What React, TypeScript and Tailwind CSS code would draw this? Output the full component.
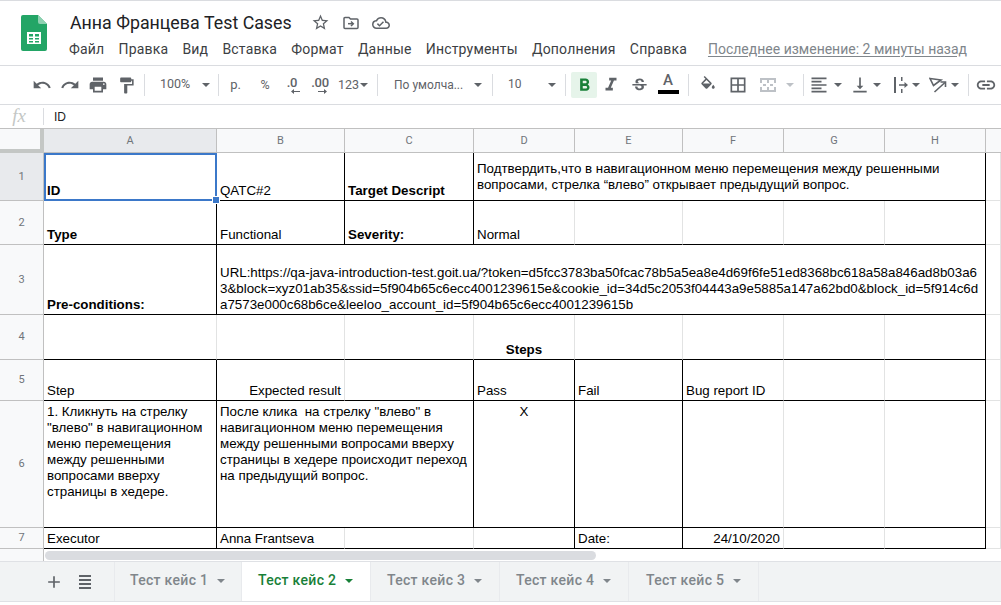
import React from "react";
import {
  MdUndo,
  MdRedo,
  MdPrint,
  MdFormatPaint,
  MdFormatBold,
  MdFormatItalic,
  MdStrikethroughS,
  MdBorderAll,
  MdFormatAlignLeft,
  MdVerticalAlignBottom,
  MdLink,
  MdAdd,
  MdStarBorder,
  MdOutlineCloudDone,
} from "react-icons/md";

const menu = ["Файл", "Правка", "Вид", "Вставка", "Формат", "Данные", "Инструменты", "Дополнения", "Справка"];
const columns = ["A", "B", "C", "D", "E", "F", "G", "H"];
const tabs = [
  { label: "Тест кейс 1", cls: "w-[127px] pl-[15px] text-[#80868b]", caret: "border-t-[#80868b]" },
  { label: "Тест кейс 2", cls: "w-[129px] pl-[16px] bg-white text-[#188038]", caret: "border-t-[#188038]" },
  { label: "Тест кейс 3", cls: "w-[129px] pl-[16px] text-[#80868b]", caret: "border-t-[#80868b]" },
  { label: "Тест кейс 4", cls: "w-[129px] pl-[16px] text-[#80868b]", caret: "border-t-[#80868b]" },
  { label: "Тест кейс 5", cls: "w-[130px] pl-[17px] text-[#80868b]", caret: "border-t-[#80868b]" },
];

const Caret = ({ className = "border-t-[#5f6368]" }: { className?: string }) => (
  <span className={`inline-block w-0 h-0 shrink-0 border-x-[4px] border-x-transparent border-t-[4px] ${className}`} />
);

const Sep = () => <div className="w-px h-[22px] bg-[#dadce0] shrink-0" />;

const Tool = ({ className, children }: { className: string; children: React.ReactNode }) => (
  <div className={`flex items-center justify-center h-full shrink-0 ${className}`}>{children}</div>
);

const Logo = () => (
  <svg width="26" height="36" viewBox="0 0 26 36">
    <path d="M2 0h15l9 9v25a2 2 0 0 1-2 2H2a2 2 0 0 1-2-2V2a2 2 0 0 1 2-2z" fill="#23a566" />
    <path d="M17 0l9 9h-7a2 2 0 0 1-2-2z" fill="#8ed1b1" />
    <path d="M6 17h14v12H6zm2 2v2.500h4V19zm6 0v2.500h4V19zM8 23v1.500h4V23zm6 0v1.500h4V23zM8 26v1.500h4V26zm6 0v1.500h4V26z" fill="#fff" fillRule="evenodd" />
  </svg>
);

const FolderMove = () => (
  <svg width="16" height="14" viewBox="0 0 16 14" fill="none" stroke="#5f6368" strokeWidth="1.500">
    <path d="M1 2.500a1 1 0 0 1 1-1h4l1.500 1.500H14a1 1 0 0 1 1 1v7.500a1 1 0 0 1-1 1H2a1 1 0 0 1-1-1z" />
    <path d="M5 7.700h5" />
    <path d="M8 5.500l2.300 2.200L8 10" />
  </svg>
);

const FillIcon = () => (
  <svg width="18" height="18" viewBox="0 0 24 24" fill="#5f6368">
    <path d="M16.560 8.940L7.620 0 6.210 1.410l2.380 2.380-5.150 5.150c-.59.59-.59 1.540 0 2.120l5.500 5.500c.29.29.68.44 1.060.44s.77-.15 1.060-.44l5.500-5.500c.59-.58.59-1.530 0-2.120zM5.210 10L10 5.210 14.790 10H5.210zM19 11.500s-2 2.170-2 3.500c0 1.100.9 2 2 2s2-.9 2-2c0-1.330-2-3.500-2-3.500z" />
  </svg>
);

const MergeIcon = () => (
  <svg width="16" height="16" viewBox="0 0 16 16" fill="#bdc1c6">
    <path d="M0 1h16v2H0zM0 13h16v2H0zM0 3h2v3H0zM14 3h2v3h-2zM0 10h2v3H0zM14 10h2v3h-2zM7 3h2v3H7zM7 10h2v3H7zM3 7h3v2H3zM10 7h3v2h-3z" />
  </svg>
);

const ClipIcon = () => (
  <svg width="16" height="16" viewBox="0 0 16 16" fill="#5f6368">
    <path d="M0 0h2v16H0zM7 0h1.500v4H7zM7 12h1.500v4H7zM5 7.300h5.500V5l3.500 3-3.500 3V8.700H5z" />
  </svg>
);

const RotateIcon = () => (
  <svg width="18" height="16" viewBox="0 0 18 16" fill="none" stroke="#5f6368" strokeWidth="1.600">
    <path d="M1 1.500l11 1.500-7.500 5.500z" />
    <path d="M5.500 15L16 5.500" />
    <path d="M11.500 5h5v5" />
  </svg>
);

const DecimalIcon = ({ label, arrow }: { label: string; arrow: string }) => (
  <div className="flex flex-col items-center font-['Roboto',sans-serif] text-[13px] leading-[13px] text-[#5f6368] font-medium">
    <span className="tracking-tight">{label}</span>
    <svg width="9" height="5" viewBox="0 0 9 5" className="ml-[6px]" fill="#5f6368">
      <path d={arrow} />
    </svg>
  </div>
);

const Toolbar = () => (
  <div className="h-[38px] box-content shrink-0 flex items-center pl-[28px] border-b border-[#dadce0] text-[#5f6368] overflow-hidden">
    <Tool className="w-[28px]"><MdUndo size={20} /></Tool>
    <Tool className="w-[28px]"><MdRedo size={20} /></Tool>
    <Tool className="w-[28px]"><MdPrint size={20} /></Tool>
    <Tool className="w-[28px]"><MdFormatPaint size={19} /></Tool>
    <div className="w-[4px] shrink-0" />
    <Sep />
    <Tool className="w-[73px] !justify-between pl-[15px] pr-[8px]">
      <span className="text-[12.500px] -mt-[2px]">100%</span>
      <Caret />
    </Tool>
    <Sep />
    <Tool className="w-[33px] text-[13px]">р.</Tool>
    <Tool className="w-[26px] text-[12.500px]">%</Tool>
    <Tool className="w-[28px]"><DecimalIcon label=".0" arrow="M9 2H3V0L0 2.500 3 5V3h6z" /></Tool>
    <Tool className="w-[28px]"><DecimalIcon label=".00" arrow="M0 2h6V0l3 2.500L6 5V3H0z" /></Tool>
    <Tool className="w-[43px] !justify-start pl-[4px] gap-[1px] text-[12.500px]">
      123
      <Caret />
    </Tool>
    <Sep />
    <Tool className="w-[114px] !justify-between pl-[16px] pr-[10px]">
      <span className="text-[12px]">По умолча...</span>
      <Caret />
    </Tool>
    <Sep />
    <Tool className="w-[72px] !justify-between pl-[15px] pr-[9px]">
      <span className="text-[12px] -mt-[2px]">10</span>
      <Caret />
    </Tool>
    <Sep />
    <div className="w-[5px] shrink-0" />
    <div className="w-[26px] h-[26px] shrink-0 flex items-center justify-center bg-[#e6f4ea] text-[#188038] rounded-[2px]">
      <MdFormatBold size={21} />
    </div>
    <Tool className="w-[28px]"><MdFormatItalic size={22} /></Tool>
    <Tool className="w-[28px]"><MdStrikethroughS size={19} /></Tool>
    <Tool className="w-[30px]">
      <div className="flex flex-col items-center w-[21px]">
        <span className="text-[15px] leading-[15px] font-medium -mt-[3px]">A</span>
        <div className="w-[21px] h-[4px] bg-black mt-[2px]" />
      </div>
    </Tool>
    <div className="w-[5px] shrink-0" />
    <Sep />
    <Tool className="w-[38px]"><FillIcon /></Tool>
    <Tool className="w-[22px]"><MdBorderAll size={20} /></Tool>
    <Tool className="w-[37px]"><MergeIcon /></Tool>
    <Caret className="border-t-[#bdc1c6]" />
    <div className="w-[9px] shrink-0" />
    <Sep />
    <Tool className="w-[30px]"><MdFormatAlignLeft size={20} /></Tool>
    <Caret />
    <Tool className="w-[20px] ml-[8px]"><MdVerticalAlignBottom size={20} /></Tool>
    <div className="w-[3px] shrink-0" />
    <Caret />
    <Tool className="w-[20px] ml-[11px]"><ClipIcon /></Tool>
    <Caret />
    <Tool className="w-[20px] ml-[8px]"><RotateIcon /></Tool>
    <div className="w-[3px] shrink-0" />
    <Caret />
    <div className="w-[9px] shrink-0" />
    <Sep />
    <Tool className="w-[34px]"><MdLink size={22} /></Tool>
  </div>
);

const light = "border-r-[#e2e3e3]";
const blackR = "border-r-black";
const lightB = "border-b-[#e2e3e3]";
const blackB = "border-b-black";

const Cell = ({ className = "", children }: { className?: string; children?: React.ReactNode }) => (
  <div className={`border-r border-b px-[3px] overflow-hidden whitespace-nowrap flex ${className}`}>
    {children && <div className="w-full">{children}</div>}
  </div>
);

const Gutter = ({ n, active }: { n: number; active?: boolean }) => (
  <div className={`border-r border-b border-[#c0c0c0] flex items-center justify-center text-[11px] text-[#70757a] font-['Roboto',sans-serif] ${active ? "bg-[#e8eaed]" : "bg-[#f8f9fa]"}`}>
    {n}
  </div>
);

const Sheet = () => (
  <div className="grid shrink-0 grid-cols-[44px_173px_128px_129px_101px_108px_101px_101px_101px_15px] grid-rows-[24px_48px_44px_70px_45px_41px_127px_21px] font-['Liberation_Sans',Arial,sans-serif] text-[13.330px] leading-[16px] text-black border-t border-[#c0c0c0] box-content">
    <div className="border-r-4 border-b-4 border-[#c4c7c5] bg-[#f8f9fa]" />
    {columns.map((c) => (
      <div
        key={c}
        className={`border-r border-b border-[#c0c0c0] flex items-center justify-center text-[11px] text-[#70757a] font-['Roboto',sans-serif] ${c === "A" ? "bg-[#e8eaed]" : "bg-[#f8f9fa]"}`}
      >
        {c}
      </div>
    ))}
    <div className="border-b border-[#c0c0c0] bg-[#f8f9fa]" />

    {/* row 1 */}
    <Gutter n={1} active />
    <div className="relative border-2 border-[#3b78c9] flex items-end px-px font-bold">
      ID
      <div className="absolute -right-[5px] -bottom-[5px] w-[8px] h-[8px] bg-[#3b78c9] border border-white z-10" />
    </div>
    <Cell className={`items-end pb-[1px] ${blackR} ${blackB}`}>QATC#2</Cell>
    <Cell className={`items-end pb-[1px] font-bold ${blackR} ${blackB}`}>Target Descript</Cell>
    <Cell className={`col-span-5 items-center ${blackR} ${blackB}`}>
      Подтвердить,что в навигационном меню перемещения между решенными
      <br />
      вопросами, стрелка “влево” открывает предыдущий вопрос.
    </Cell>
    <Cell className={`${light} ${lightB}`} />

    {/* row 2 */}
    <Gutter n={2} />
    <Cell className={`items-end pb-[1px] font-bold ${blackR} ${blackB}`}>Type</Cell>
    <Cell className={`items-end pb-[1px] ${blackR} ${blackB}`}>Functional</Cell>
    <Cell className={`items-end pb-[1px] font-bold ${blackR} ${blackB}`}>Severity:</Cell>
    <Cell className={`items-end pb-[1px] ${light} ${blackB}`}>Normal</Cell>
    <Cell className={`${light} ${blackB}`} />
    <Cell className={`${light} ${blackB}`} />
    <Cell className={`${light} ${blackB}`} />
    <Cell className={`${blackR} ${blackB}`} />
    <Cell className={`${light} ${lightB}`} />

    {/* row 3 */}
    <Gutter n={3} />
    <Cell className={`items-end pb-[1px] font-bold ${blackR} ${blackB}`}>Pre-conditions:</Cell>
    <Cell className={`col-span-7 items-end pb-[1px] ${blackR} ${blackB}`}>
      URL:https://qa-java-introduction-test.goit.ua/?token=d5fcc3783ba50fcac78b5a5ea8e4d69f6fe51ed8368bc618a58a846ad8b03a6
      <br />
      3&amp;block=xyz01ab35&amp;ssid=5f904b65c6ecc4001239615e&amp;cookie_id=34d5c2053f04443a9e5885a147a62bd0&amp;block_id=5f914c6d
      <br />
      a7573e000c68b6ce&amp;leeloo_account_id=5f904b65c6ecc4001239615b
    </Cell>
    <Cell className={`${light} ${lightB}`} />

    {/* row 4 */}
    <Gutter n={4} />
    <Cell className={`${light} ${blackB}`} />
    <Cell className={`${light} ${blackB}`} />
    <Cell className={`${light} ${blackB}`} />
    <Cell className={`items-end pb-[1px] text-center font-bold ${light} ${blackB}`}>Steps</Cell>
    <Cell className={`${light} ${blackB}`} />
    <Cell className={`${light} ${blackB}`} />
    <Cell className={`${light} ${blackB}`} />
    <Cell className={`${blackR} ${blackB}`} />
    <Cell className={`${light} ${lightB}`} />

    {/* row 5 */}
    <Gutter n={5} />
    <Cell className={`items-end pb-[1px] ${blackR} ${blackB}`}>Step</Cell>
    <Cell className={`items-end pb-[1px] text-right ${light} ${blackB}`}>Expected result</Cell>
    <Cell className={`${blackR} ${blackB}`} />
    <Cell className={`items-end pb-[1px] ${blackR} ${blackB}`}>Pass</Cell>
    <Cell className={`items-end pb-[1px] ${blackR} ${blackB}`}>Fail</Cell>
    <Cell className={`items-end pb-[1px] ${light} ${blackB}`}>Bug report ID</Cell>
    <Cell className={`${light} ${blackB}`} />
    <Cell className={`${blackR} ${blackB}`} />
    <Cell className={`${light} ${lightB}`} />

    {/* row 6 */}
    <Gutter n={6} />
    <Cell className={`items-start pt-[3px] ${blackR} ${blackB}`}>
      1. Кликнуть на стрелку
      <br />
      "влево" в навигационном
      <br />
      меню перемещения
      <br />
      между решенными
      <br />
      вопросами вверху
      <br />
      страницы в хедере.
    </Cell>
    <Cell className={`col-span-2 items-start pt-[3px] whitespace-pre ${blackR} ${blackB}`}>
      {'После клика  на стрелку "влево" в'}
      <br />
      навигационном меню перемещения
      <br />
      между решенными вопросами вверху
      <br />
      страницы в хедере происходит переход
      <br />
      на предыдущий вопрос.
    </Cell>
    <Cell className={`items-start pt-[3px] text-center ${blackR} ${blackB}`}>X</Cell>
    <Cell className={`${blackR} ${blackB}`} />
    <Cell className={`${light} ${blackB}`} />
    <Cell className={`${light} ${blackB}`} />
    <Cell className={`${blackR} ${blackB}`} />
    <Cell className={`${light} ${lightB}`} />

    {/* row 7 */}
    <Gutter n={7} />
    <Cell className={`items-end pb-[1px] ${blackR} ${blackB}`}>Executor</Cell>
    <Cell className={`items-end pb-[1px] ${light} ${blackB}`}>Anna Frantseva</Cell>
    <Cell className={`${light} ${blackB}`} />
    <Cell className={`${blackR} ${blackB}`} />
    <Cell className={`items-end pb-[1px] ${blackR} ${blackB}`}>Date:</Cell>
    <Cell className={`items-end pb-[1px] text-right ${light} ${blackB}`}>24/10/2020</Cell>
    <Cell className={`${light} ${blackB}`} />
    <Cell className={`${blackR} ${blackB}`} />
    <Cell className={`${light} ${lightB}`} />
  </div>
);

const App: React.FC = () => {
  return (
    <div className="w-[1001px] h-[605px] overflow-hidden flex flex-col bg-white font-['Roboto',sans-serif] border-t border-[#dadce0]">
      {/* header */}
      <div className="h-[64px] box-content border-b border-[#dadce0] flex shrink-0">
        <div className="w-[69px] shrink-0 pl-[21px] pt-[14px]">
          <Logo />
        </div>
        <div className="flex flex-col">
          <div className="flex items-center h-[21px] mt-[11px] pl-px">
            <span className="text-[17.800px] leading-[21px] text-[#202124] w-[241px] whitespace-nowrap">Анна Францева Test Cases</span>
            <MdStarBorder size={19} className="text-[#5f6368]" />
            <div className="ml-[13px]"><FolderMove /></div>
            <MdOutlineCloudDone size={18} className="text-[#5f6368] ml-[13px]" />
          </div>
          <div className="flex items-center h-[20px] mt-[6px] text-[14px] text-[#3c4043] whitespace-nowrap">
            <div className="flex gap-[14.200px] tracking-[0.180px]">
              {menu.map((m) => (
                <span key={m}>{m}</span>
              ))}
            </div>
            <span className="ml-[21px] text-[#80868b] underline underline-offset-2">Последнее изменение: 2 минуты назад</span>
          </div>
        </div>
      </div>

      <Toolbar />

      {/* formula bar */}
      <div className="h-[23px] shrink-0 flex items-center text-[12px] text-[#202124]">
        <div className="w-[43px] text-center pr-[5px] font-['Liberation_Serif',serif] italic text-[19px] text-[#c4c7c5]">fx</div>
        <div className="w-px h-[17px] bg-[#dadce0]" />
        <span className="ml-[10px] font-['Liberation_Sans',sans-serif]">ID</span>
      </div>

      <Sheet />

      {/* horizontal scrollbar */}
      <div className="h-[12px] shrink-0 flex">
        <div className="w-[44px] bg-[#f8f9fa] border-r border-[#c0c0c0]" />
        <div className="flex-1 pl-px pt-[2px]">
          <div className="w-[551px] h-[9px] rounded-full bg-[#dadce0]" />
        </div>
      </div>

      {/* sheet tabs */}
      <div className="h-[41px] shrink-0 flex bg-[#f1f3f4] border-t border-b border-[#dfe1e5] text-[14px] font-medium tracking-[0.300px]">
        <div className="w-[115px] flex items-center text-[#5f6368] border-r border-[#e8eaed]">
          <MdAdd size={20} className="ml-[44px]" />
          <div className="ml-[15px] w-[12px] flex flex-col gap-[2px]">
            <div className="h-[2px] bg-[#5f6368]" />
            <div className="h-[2px] bg-[#5f6368]" />
            <div className="h-[2px] bg-[#5f6368]" />
            <div className="h-[2px] bg-[#5f6368]" />
          </div>
        </div>
        {tabs.map((t) => (
          <div key={t.label} className={`shrink-0 flex items-center gap-[9px] pb-[2px] border-r border-[#e8eaed] ${t.cls}`}>
            {t.label}
            <Caret className={t.caret} />
          </div>
        ))}
      </div>
    </div>
  );
};

export default App;
